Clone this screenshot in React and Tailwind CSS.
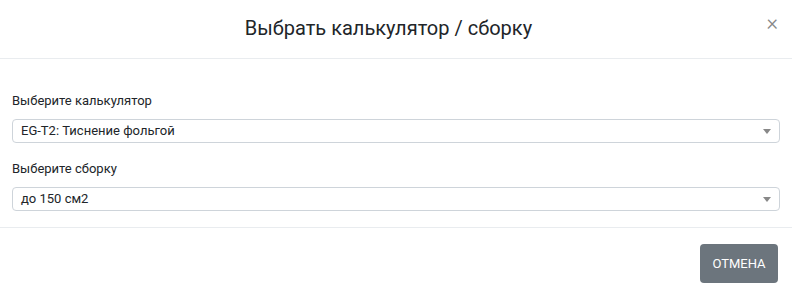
export default function App() {
  return (
    <div className="w-[792px] h-[296px] bg-white text-[#212529] font-['Roboto',sans-serif] flex flex-col">
      <div className="relative h-[59px] border-b border-[#e9ecef] flex items-center justify-center pr-[15px]">
        <h5 className="text-[20px] leading-none -mt-[2px]">Выбрать калькулятор / сборку</h5>
        <button className="absolute right-[14px] top-[12px] text-[#888] text-[22px] leading-none font-light">×</button>
      </div>
      <div className="px-[12px] pt-[32px] pb-[16px] border-b border-[#e9ecef] flex flex-col">
        <label className="text-[13px] leading-[20px] mb-[8px]">Выберите калькулятор</label>
        <Select value="EG-T2: Тиснение фольгой" />
        <label className="text-[13px] leading-[20px] mt-[16px] mb-[8px]">Выберите сборку</label>
        <Select value="до 150 см2" />
      </div>
      <div className="flex justify-end px-[14px] pt-[16px]">
        <button className="w-[78px] h-[39px] rounded-[4px] bg-[#6c757d] text-white text-[13px]">ОТМЕНА</button>
      </div>
    </div>
  );
}

function Select({ value }) {
  return (
    <div className="h-[24px] border border-[#ced4da] rounded-[4px] flex items-center justify-between pl-[8px] pr-[8px]">
      <span className="text-[13px]">{value}</span>
      <span className="w-0 h-0 border-l-[4px] border-r-[4px] border-t-[5px] border-l-transparent border-r-transparent border-t-[#888]" />
    </div>
  );
}
